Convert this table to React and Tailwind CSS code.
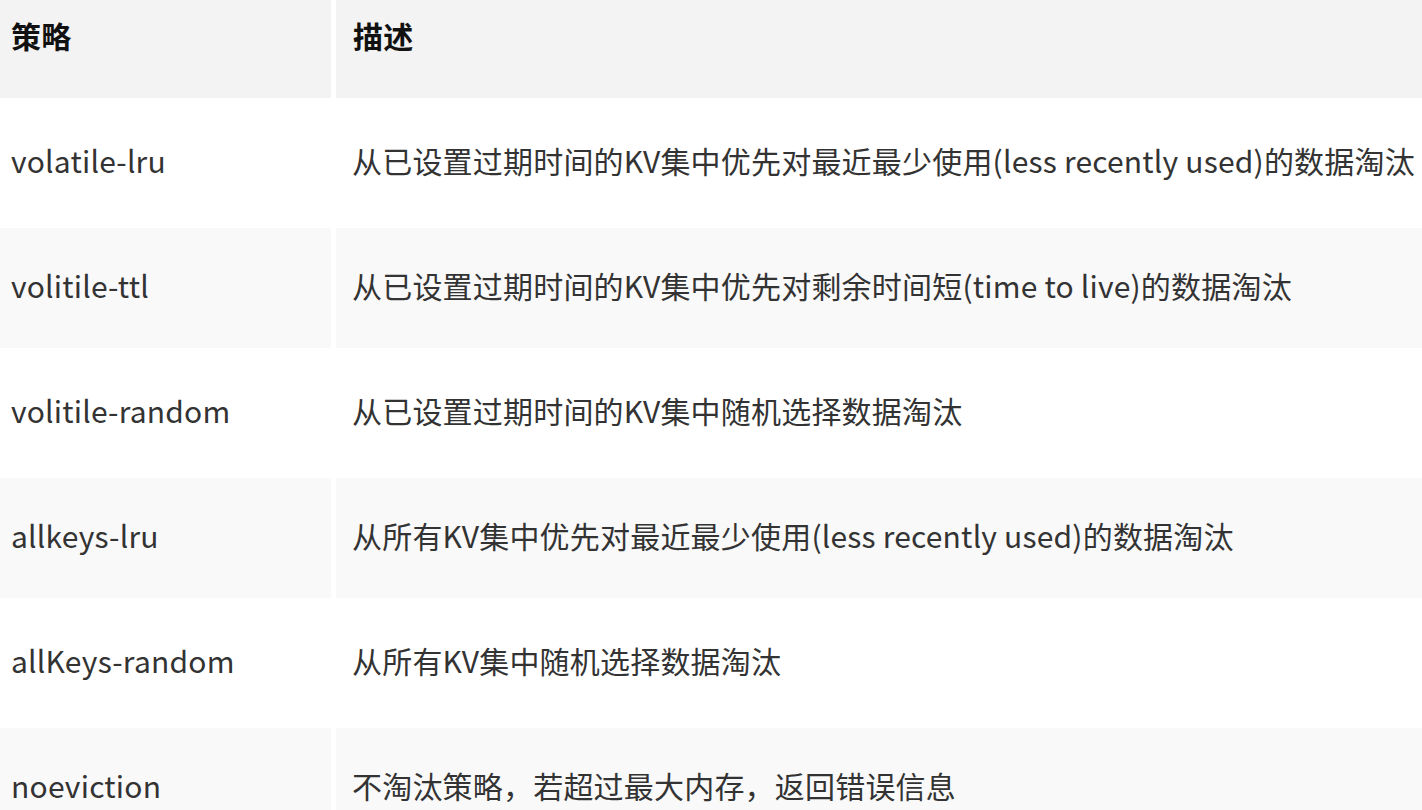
const rows = [
  ["volatile-lru", "从已设置过期时间的KV集中优先对最近最少使用(less recently used)的数据淘汰"],
  ["volitile-ttl", "从已设置过期时间的KV集中优先对剩余时间短(time to live)的数据淘汰"],
  ["volitile-random", "从已设置过期时间的KV集中随机选择数据淘汰"],
  ["allkeys-lru", "从所有KV集中优先对最近最少使用(less recently used)的数据淘汰"],
  ["allKeys-random", "从所有KV集中随机选择数据淘汰"],
  ["noeviction", "不淘汰策略，若超过最大内存，返回错误信息"],
];

export default function App() {
  return (
    <div
      className="w-[1422px] h-[810px] overflow-hidden bg-white text-[#333333] text-[30px] tracking-[0.2px]"
      style={{ fontFamily: '"Noto Sans CJK SC", "Noto Sans", sans-serif' }}
    >
      <div className="grid grid-cols-[331px_1fr] gap-x-[5px] gap-y-[5px]">
        {/* Header */}
        <div className="h-[98px] bg-[#f3f3f3] pl-[11px] pt-[15px] leading-[40px] font-bold text-[#111]">
          策略
        </div>
        <div className="h-[98px] bg-[#f3f3f3] pl-[17px] pt-[15px] leading-[40px] font-bold text-[#111]">
          描述
        </div>

        {rows.map(([name, desc], i) => {
          const bg = i % 2 === 0 ? "bg-white" : "bg-[#f9f9f9]";
          return [
            <div key={name + "-a"} className={`h-[120px] ${bg} pl-[11px] pb-[7px] flex items-center leading-[40px]`}>
              {name}
            </div>,
            <div
              key={name + "-b"}
              className={`h-[120px] ${bg} pl-[16px] pb-[7px] flex items-center leading-[40px] whitespace-nowrap overflow-hidden`}
            >
              {desc}
            </div>,
          ];
        })}
      </div>
    </div>
  );
}
